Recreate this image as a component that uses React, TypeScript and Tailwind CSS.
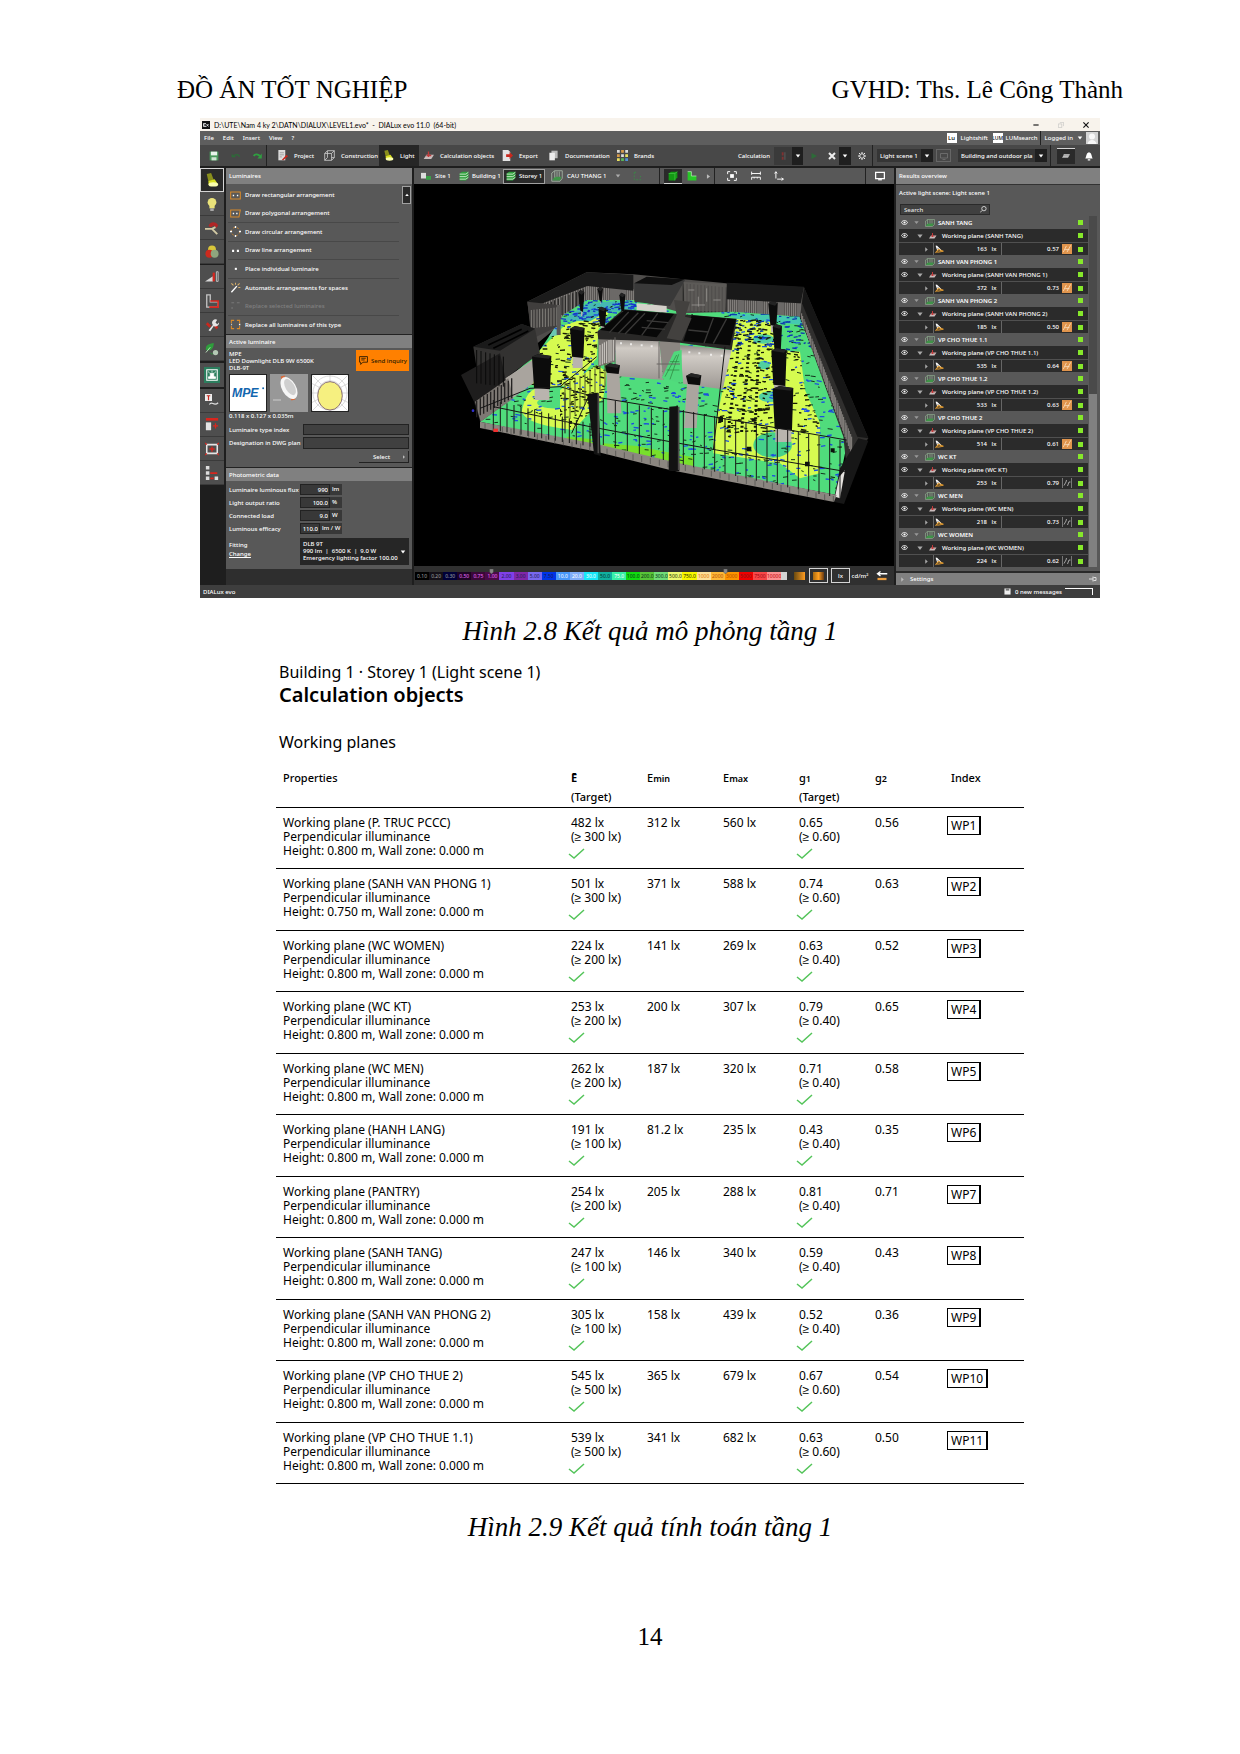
import React from "react";

type Kids = { children?: React.ReactNode };

function Ic({ children, className = "size-[10px]" }: Kids & { className?: string }) {
  return (
    <svg viewBox="0 0 16 16" className={`${className} shrink-0`} fill="none" aria-hidden="true">
      {children}
    </svg>
  );
}

const Lamp = () => (
  <>
    <path d="M2 1l5-1 3 8-6 2z" fill="#8a8f1c" />
    <path d="M4 9l7-2 4 6H4z" fill="#d9e021" />
    <ellipse cx="9.500" cy="13" rx="5.500" ry="2.500" fill="#fbffb0" />
  </>
);
const Floppy = () => (
  <>
    <path d="M1 1h14v14H1z" fill="#4a9a5c" />
    <path d="M3 1h10v6H3z" fill="#e8f4ea" />
    <path d="M4 10h8v5H4z" fill="#cfe6d3" />
  </>
);
const Layers = () => (
  <>
    <path d="M1 4l4-3h10v10l-4 4H1z" fill="#2f9e3c" />
    <path d="M1 5h10l4-3M1 9h10l4-3M1 13h10l4-3" stroke="#d5f0d5" strokeWidth="1.400" />
  </>
);
const Room = () => (
  <>
    <path d="M2 13l3-4h9l-2 5H2z" fill="#3f9448" />
    <path d="M1 4v11h11l3-4V1H5L1 4zM5 1v9M8 2v7M11 2v7" stroke="#a9b8a9" strokeWidth="1.100" />
  </>
);
const Plane = () => (
  <>
    <path d="M5 7h11l-4 6H1z" fill="#c9bcbc" />
    <path d="M8 2v8M5 8h7" stroke="#c03a3a" strokeWidth="2" />
  </>
);
const Eye = () => (
  <>
    <path d="M1 8c3-6 11-6 14 0-3 6-11 6-14 0z" stroke="#fff" strokeWidth="2" />
    <circle cx="8" cy="8" r="2.500" fill="#fff" />
  </>
);

/* ---------- 3D view ---------- */

function marks(count: number, seed: number, x0: number, y0: number, w: number, h: number) {
  let s = seed * 7919;
  const r = () => {
    s = (s * 16807) % 2147483647;
    return s / 2147483647;
  };
  let d = "";
  for (let i = 0; i < count; i++) {
    const x = Math.round(x0 + r() * w);
    const y = Math.round(y0 + r() * h);
    const l = Math.round(5 + r() * 11);
    d += `M${x} ${y}l${l} ${Math.round(r() * 6 - 3)}`;
  }
  return d;
}

function bars(x1: number, y1: number, x2: number, y2: number, n: number, h1: number, h2: number) {
  let d = "";
  for (let i = 0; i <= n; i++) {
    const t = i / n;
    d += `M${Math.round(x1 + (x2 - x1) * t)} ${Math.round(y1 + (y2 - y1) * t)}v${Math.round(h1 + (h2 - h1) * t)}`;
  }
  return d;
}

function Pillar({ x, y, w, h, base }: { x: number; y: number; w: number; h: number; base: number }) {
  return (
    <g>
      <path d={`M${x + 8} ${y + h - 6}h${w - 14}v${base}h${-(w - 14)}z`} fill="#b9b4ae" />
      <path d={`M${x} ${y + 6}l${w / 3} -8l${(w * 2) / 3} 6l-4 ${h}l${-w + 10} -4z`} fill="#0c0c0c" />
      <path d={`M${x} ${y + 6}l${w / 3} -8l${(w * 2) / 3} 6l-8 8z`} fill="#242424" />
    </g>
  );
}

function Scene() {
  return (
    <svg viewBox="-108 -198 1440 1146" className="block min-h-0 w-full flex-1 bg-black" role="img" aria-label="Storey 1 light simulation">
      <defs>
        <clipPath id="floor">
          <path d="M90 515L180 450L160 400L270 300L340 195L410 150L560 150L700 190L850 185L1048 200L1195 560L1160 735L690 645L440 590Z" />
        </clipPath>
        <clipPath id="yellow">
          <path d="M270 300L345 225L440 195L490 165L445 240L440 325L370 405L300 410L190 400zM330 420L440 345L470 365L460 445L370 540L330 500zM790 590L860 205L960 208L985 300L1050 305L1065 420L1110 520L1108 670L1050 685L990 640L790 610z" />
        </clipPath>
        <linearGradient id="wall" x1="0" y1="0" x2="0" y2="1">
          <stop offset="0" stopColor="#8e8a86" />
          <stop offset="0.250" stopColor="#d0cbc5" />
          <stop offset="1" stopColor="#9c9792" />
        </linearGradient>
      </defs>
      {/* rear walls */}
      <path d="M232 155L410 67L550 73L700 88L830 100L1062 112L1080 200L830 200L560 190L410 150L340 215L250 290z" fill="#4f4d4b" />
      <path d={bars(245, 170, 410, 105, 22, 90, 50) + bars(415, 105, 550, 118, 22, 45, 40) + bars(835, 145, 1050, 160, 34, 44, 44)} stroke="#a8a4a0" strokeWidth="2" />
      <path d={bars(250, 175, 400, 118, 14, 70, 40) + bars(700, 100, 828, 112, 12, 80, 80)} stroke="#2b2a29" strokeWidth="4" />
      <path d="M232 155L410 67L550 74V122L412 108L240 175z" fill="#1b1b1b" />
      <path d="M830 98L1062 110L1052 160L830 148z" fill="#191919" />
      <path d="M700 96L830 102L826 185L705 182z" fill="#625f5d" fillOpacity="0.700" />
      <path d="M715 120h18M745 140v30M770 115v40M790 150h22M725 165h40" stroke="#a8a4a0" strokeWidth="2" />

      {/* calculation surface */}
      <g clipPath="url(#floor)">
        <path d="M60 120H1220V760H60z" fill="#50dc7c" />
        <path d="M270 300L345 225L440 195L490 165L445 240L440 325L370 405L300 410L190 400zM330 420L440 345L470 365L460 445L370 540L330 500z" fill="#d6fb50" />
        <path d="M215 485C230 420 250 410 290 415L300 445C240 445 250 480 330 475L375 500L370 540C300 530 230 520 215 485z" fill="#d6fb50" />
        <path d="M860 205L960 208L985 300L1050 305L1065 420L1110 520L1108 670L1050 685L990 640L790 610L790 560z" fill="#d6fb50" />
        <path d="M340 210l70-50 90-6 60 6-10 22-80 4-50 28z" fill="#45b9b4" />
        <path d="M256 235l70-15v35l-62 12z" fill="#6cc7b4" />
        <path d="M830 190l220 10 10 25-200-18z" fill="#45c9b0" />
        <ellipse cx="940" cy="267" rx="32" ry="14" fill="#50cfa0" />
        <ellipse cx="942" cy="345" rx="18" ry="13" fill="#50cfa0" />
        <ellipse cx="960" cy="440" rx="34" ry="16" fill="#50cfa0" />
        <ellipse cx="968" cy="585" rx="58" ry="38" fill="#46d18a" />
        <path d="M460 580L560 588L730 622V650L450 598zM350 560l80 8v20l-80-12z" fill="#78e02c" />
        <path d={marks(620, 7, 100, 140, 1090, 580)} stroke="#14341c" strokeWidth="3" />
        <path d={marks(560, 31, 100, 140, 1090, 580)} stroke="#1c4fe0" strokeWidth="4" />
        <path d={marks(110, 97, 330, 140, 230, 80)} stroke="#1637c8" strokeWidth="4" />
        <path d={marks(100, 55, 830, 185, 260, 120)} stroke="#0d3ab0" strokeWidth="4" />
      </g>
      <g clipPath="url(#yellow)">
        <path d={marks(900, 11, 180, 160, 930, 400)} stroke="#161a06" strokeWidth="4" />
      </g>
      <path d={bars(875, 210, 835, 540, 24, 4, 6) + bars(905, 210, 875, 540, 26, 4, 6) + bars(930, 210, 915, 540, 26, 4, 6)} stroke="#10180a" strokeWidth="9" />

      {/* left volumes */}
      <path d="M232 155L325 165L332 225L256 262L240 225z" fill="#403e3d" />
      <path d={bars(244, 180, 320, 172, 9, 55, 55)} stroke="#a5a19c" strokeWidth="2" />
      <path d="M70 290L215 222L255 236L270 310L155 392L90 420z" fill="#333231" />
      <path d="M70 290L215 222L255 236L150 302z" fill="#1a1a1a" />
      <path d="M115 285L215 238M130 295L235 243" stroke="#000" strokeWidth="5" />
      <path d="M155 392L270 315L250 400L180 450z" fill="#a9a49e" />
      <path d="M33 375L150 310L180 450L90 515L72 455z" fill="#1e1d1d" />
      <path d="M75 455L175 385L190 445L92 515z" fill="#7d7873" />
      <path d={bars(80, 452, 185, 385, 10, 50, 60)} stroke="#252322" strokeWidth="4" />
      <path d={bars(80, 300, 160, 320, 6, 100, 90)} stroke="#0a0a0a" strokeWidth="3" />

      {/* service core */}
      <path d="M560 160L650 168V188L560 180z" fill="#d4d0ca" />
      <path d="M553 100L590 82L705 90L660 168L553 155z" fill="#393939" />
      <path d="M553 100L590 80L705 88L665 105z" fill="#0f0f0f" />
      <path d="M445 240L495 255V335L445 350z" fill="#77736f" />
      <path d={bars(450, 285, 490, 262, 6, 60, 70)} stroke="#d2cec8" strokeWidth="3" />
      <path d="M493 262L628 272L640 390L500 378z" fill="url(#wall)" />
      <path d="M628 275L690 235V305L640 390z" fill="#8b8681" />
      <path d="M690 285L845 300L818 418L700 402z" fill="url(#wall)" />
      <path d="M635 385L672 305L695 300V400z" fill="#50d87c" />
      <path d="M645 380l35-65M660 388l26-75M650 360h38M660 335h28" stroke="#2a7c3a" strokeWidth="2" />
      <path d="M442 245L520 178L860 206L845 300L690 278L628 274L445 268z" fill="#292827" />
      <path d="M450 240L525 180L672 192L620 262z" fill="#080808" />
      <path d="M725 196L858 208L840 286L700 274z" fill="#080808" />
      <path d="M672 150L720 155L705 200L725 205L695 272L650 265L680 195z" fill="#43413f" />
      <path d="M478 248l58-62M505 250l60-62M525 252l60-62M575 256l48-66M575 232l70 6M590 212l65 6M762 280l28-76M715 240l60 6M790 280l40-74" stroke="#393837" strokeWidth="4" />
      <path d="M510 280h6M540 283h6M572 286h6M602 289h6M715 307h6M745 310h6M780 314h6M812 317h6" stroke="#fff" strokeWidth="6" opacity="0.700" />
      <path d="M627 275v110M620 342h70M495 262v110" stroke="#6a6764" strokeWidth="3" />

      {/* right facade */}
      <path d="M1062 112L1255 565L1190 655L1180 560L1050 200z" fill="#302f2e" />
      <path d={bars(1055, 190, 1205, 560, 44, 22, 55)} stroke="#b3aea9" strokeWidth="2" />
      <path d="M1062 112L1255 565L1222 560L1056 160z" fill="#161616" />
      <path d="M1170 655L1225 565L1255 572L1182 762L1150 755z" fill="#171717" />
      <path d="M1168 680L1185 660L1170 745L1155 740z" fill="#e5e2de" />

      {/* columns */}
      <Pillar x={385} y={122} w={18} h={60} base={22} />
      <Pillar x={443} y={112} w={16} h={40} base={16} />
      <Pillar x={508} y={130} w={18} h={52} base={8} />
      <Pillar x={445} y={172} w={24} h={55} base={12} />
      <path d="M320 165h12v90h-12z" fill="#5a5856" />
      <Pillar x={360} y={230} w={44} h={90} base={40} />
      <Pillar x={246} y={314} w={58} h={100} base={42} />
      <Pillar x={955} y={155} w={28} h={70} base={28} />
      <Pillar x={968} y={224} w={28} h={80} base={40} />
      <Pillar x={964} y={296} w={46} h={108} base={42} />
      <Pillar x={968} y={410} w={62} h={126} base={46} />
      <path d="M470 360h38l6 130h-42z" fill="#aaa59f" />
      <Pillar x={464} y={342} w={46} h={26} base={4} />
      <path d="M712 390h36l-8 144h-38z" fill="#aaa59f" />
      <Pillar x={708} y={372} w={46} h={30} base={4} />

      {/* front glazing */}
      <path d="M90 515L440 582L690 640L1160 735L1152 756L660 660L440 605L90 534z" fill="#8b8680" />
      <path d={bars(130, 450, 420, 520, 14, 90, 70) + bars(460, 445, 640, 480, 5, 140, 150) + bars(700, 480, 1170, 570, 15, 165, 175)} stroke="#171716" strokeWidth="3" />
      <path d={bars(105, 520, 1150, 738, 40, 18, 18)} stroke="#4a4846" strokeWidth="2" />
      <path d="M90 475L240 415L330 410L430 440L660 478L1190 570M130 470L420 530L660 575L800 600L1190 665M330 410L440 320M420 430L365 550M345 430v120M825 290L790 600" stroke="#151515" strokeWidth="3" fill="none" />
      <path d={bars(345, 400, 465, 340, 8, 120, 70)} stroke="#55582e" strokeWidth="3" />
      <path d="M412 432L445 428L452 618L432 612z" fill="#121212" />
      <path d="M658 470L684 468L688 664L656 662z" fill="#121212" />
      <path d="M445 430v180M686 470v190" stroke="#4b4947" strokeWidth="5" />
      <path d="M805 500h14v16h-14zM890 590h14v14h-14zM1065 635h14v14h-14zM1142 595h12v12h-12zM905 505h12v10h-12z" fill="#0c120c" />
      <path d="M130 536h14v10h-14z" fill="#f03030" />
      <circle cx="69" cy="482" r="4" fill="#3030d0" />
    </svg>
  );
}

/* ---------- Application window ---------- */

const plain = "border-b border-[#3a3a3a] bg-[#4e4e4e]";

const stripIcons: { label: string; icon: React.ReactNode; cls: string }[] = [
  { label: "Luminaires", icon: <Lamp />, cls: "border border-neutral-300 bg-[#2a2a2a]" },
  { label: "Lamps", cls: plain, icon: <><circle cx="8" cy="6" r="5" fill="#e9e27a" /><path d="M5 10h6v3H5z" fill="#e9e27a" /><path d="M6 13h4v3H6z" fill="#a8a8a8" /></> },
  { label: "Arrange", cls: plain, icon: <><path d="M4 6c1-6 9-6 11-1l-2 3-3-3-3 2z" fill="#b02626" /><path d="M0 9l8 0 6 6M8 9l4-2" stroke="#d2c9a4" strokeWidth="2.200" /></> },
  { label: "Colours", cls: plain, icon: <><circle cx="8" cy="5" r="4.500" fill="#d8c63a" /><circle cx="5" cy="10" r="4.500" fill="#cc2a1e" /><circle cx="11" cy="10" r="4.500" fill="#8fa57e" /></> },
  { label: "Dimming", cls: "mt-px border-b border-[#3a3a3a] bg-[#4e4e4e]", icon: <><path d="M0 13L9 7v6z" fill="#d8d8d8" /><path d="M10 3v10" stroke="#d8261e" strokeWidth="2.500" /><path d="M13 2h2v11h-2z" stroke="#c9c9c9" /></> },
  { label: "Areas", cls: plain, icon: <><path d="M2 1h4v8h9v6H2z" stroke="#c4c4c4" strokeWidth="1.500" /><path d="M6 8h9v7H5" stroke="#d8261e" strokeWidth="1.800" /></> },
  { label: "Maintenance", cls: plain, icon: <><path d="M2 6l4 4M10 6l4 6" stroke="#c8281e" strokeWidth="3" /><path d="M4 14l5-6a4 4 0 0 1 5-6l-2 3 2 2 2-2a4 4 0 0 1-6 4l-4 6z" fill="#e4e4e4" /></> },
  { label: "Energy", cls: plain, icon: <><path d="M1 9C0 3 5 2 10 1c0 6-3 10-9 8z" fill="#2f9e3c" /><path d="M1 12l5-6" stroke="#c8ecc8" /><path d="M6 12c2 3 3 1 5 0" stroke="#2f9e3c" /><circle cx="12" cy="12" r="3" fill="#b5c9b5" /></> },
  { label: "Emergency", cls: "my-[2px] border-4 border-[#4e4e4e] bg-[#2c7e5e]", icon: <><path d="M2 2h12v12H2z" stroke="#fff" strokeWidth="1.200" /><path d="M4 10h8v2H4zM6 6h4v4H6zM8 3v2M4 4l1 2M12 4l-1 2" fill="#fff" stroke="#fff" strokeWidth="0.800" /></> },
  { label: "Text", cls: plain, icon: <><path d="M0 0h8v8H0z" fill="#eee" /><path d="M2 2h4M4 2v5" stroke="#c8281e" strokeWidth="1.400" /><path d="M5 12c3-5 5 3 10-2" stroke="#ddd" strokeWidth="1.400" /></> },
  { label: "Export", cls: plain, icon: <><path d="M1 0h14v3H1z" fill="#d8261e" /><path d="M1 5h6v9H1z" fill="#e4e4e4" /><path d="M9 9h6M12 6v6" stroke="#d8261e" strokeWidth="1.500" /></> },
  { label: "Frame", cls: plain, icon: <><path d="M2 3h12v10H2z" stroke="#e4e4e4" strokeWidth="1.800" /><path d="M8 5v6M5 8h6M0 1l2 2M16 1l-2 2M0 15l2-2M16 15l-2-2" stroke="#d8261e" strokeWidth="1.500" /></> },
  { label: "Structure", cls: plain, icon: <><path d="M1 0h4v4H1zM1 6h4v4H1zM1 12h4v4H1zM11 12h4v4h-4z" fill="#ddd" /><path d="M6 8h8M6 14h4" stroke="#d8261e" strokeWidth="2" /></> },
];

const tools: { label: string; sep: string; icon: React.ReactNode; dim?: boolean }[] = [
  { label: "Draw rectangular arrangement", sep: "", icon: <><path d="M1 3h14v10H1z" stroke="#d88a2a" strokeWidth="1.500" /><path d="M4 7h2v2H4zM10 7h2v2h-2z" fill="#fff" /></> },
  { label: "Draw polygonal arrangement", sep: "border-b", icon: <><path d="M1 3h14l-2 10H1z" stroke="#d88a2a" strokeWidth="1.500" /><path d="M4 7h2v2H4zM9 7h2v2H9z" fill="#fff" /></> },
  { label: "Draw circular arrangement", sep: "border-b", icon: <><circle cx="8" cy="8" r="6" stroke="#d88a2a" strokeDasharray="3 3" strokeWidth="1.300" /><path d="M7 0h2v3H7zM7 13h2v3H7zM0 7h3v2H0zM13 7h3v2h-3z" fill="#fff" /></> },
  { label: "Draw line arrangement", sep: "border-b", icon: <path d="M3 7h3v3H3zM10 7h3v3h-3z" fill="#fff" /> },
  { label: "Place individual luminaire", sep: "border-b", icon: <path d="M7 7h3v3H7z" fill="#fff" /> },
  { label: "Automatic arrangements for spaces", sep: "", icon: <><path d="M2 15L10 6" stroke="#fff" strokeWidth="2" /><path d="M2 2l3 3M8 1v3M14 2l-3 3M15 8h-3" stroke="#d8b06a" strokeWidth="1.500" /></> },
  { label: "Replace selected luminaires", sep: "border-b", dim: true, icon: <path d="M2 4h4M10 4h4M3 10v3" stroke="#777" strokeWidth="1.500" /> },
  { label: "Replace all luminaires of this type", sep: "", icon: <><path d="M2 6V2h4M10 2h4v4M14 10v4h-4M6 14H2v-4" stroke="#d88a2a" strokeWidth="1.500" /><path d="M2 8h1M13 8h2" stroke="#fff" strokeWidth="2" /></> },
];

const groups: [string, string, string, string, boolean][] = [
  ["SANH TANG", "Working plane (SANH TANG)", "163", "0.57", true],
  ["SANH VAN PHONG 1", "Working plane (SANH VAN PHONG 1)", "372", "0.73", true],
  ["SANH VAN PHONG 2", "Working plane (SANH VAN PHONG 2)", "185", "0.50", true],
  ["VP CHO THUE 1.1", "Working plane (VP CHO THUE 1.1)", "535", "0.64", true],
  ["VP CHO THUE 1.2", "Working plane (VP CHO THUE 1.2)", "533", "0.63", true],
  ["VP CHO THUE 2", "Working plane (VP CHO THUE 2)", "514", "0.61", true],
  ["WC KT", "Working plane (WC KT)", "253", "0.79", false],
  ["WC MEN", "Working plane (WC MEN)", "218", "0.73", false],
  ["WC WOMEN", "Working plane (WC WOMEN)", "224", "0.62", false],
];

const scale: [string, string][] = [
  ["0.10", "bg-black text-neutral-400"],
  ["0.20", "bg-[#141018] text-neutral-400"],
  ["0.30", "bg-[#000038] text-neutral-400"],
  ["0.50", "bg-[#1c0424] text-fuchsia-400"],
  ["0.75", "bg-[#3a0838] text-fuchsia-400"],
  ["1.00", "bg-[#4a0a48] text-fuchsia-400"],
  ["2.00", "bg-[#8040e8] text-indigo-950"],
  ["3.00", "bg-[#8028a8] text-indigo-950"],
  ["5.00", "bg-[#7868f0] text-indigo-950"],
  ["7.50", "bg-[#0034e8] text-indigo-950"],
  ["10.0", "bg-[#4898f8] text-white"],
  ["20.0", "bg-[#80acf8] text-white"],
  ["30.0", "bg-[#18e8f8] text-white"],
  ["50.0", "bg-[#10b0a0] text-teal-950"],
  ["75.0", "bg-[#38f0a8] text-white"],
  ["100.0", "bg-[#10dc10] text-green-950"],
  ["200.0", "bg-[#58c438] text-green-950"],
  ["300.0", "bg-[#70dc78] text-green-950"],
  ["500.0", "bg-[#ecf870] text-lime-950"],
  ["750.0", "bg-[#f8f800] text-lime-950"],
  ["1000", "bg-[#fce098] text-amber-600"],
  ["2000", "bg-[#fcb838] text-amber-700"],
  ["3000", "bg-[#fc9400] text-amber-700"],
  ["5000", "bg-[#f00000] text-red-900"],
  ["7500", "bg-[#f84848] text-red-800"],
  ["10000", "bg-[#fc9090] text-red-700"],
];

const Caret = ({ className = "" }: { className?: string }) => (
  <Ic className={`size-[6px] ${className}`}>
    <path d="M2 4h12l-6 8z" fill="#fff" />
  </Ic>
);

function Tab({ label, width, icon, active }: { label: string; width: string; icon: React.ReactNode; active?: boolean }) {
  return (
    <button className={`flex h-full items-center gap-[6px] whitespace-nowrap pl-1 ${width} ${active ? "bg-[#262626]" : ""}`}>
      <Ic className="size-[11px]">{icon}</Ic>
      {label}
    </button>
  );
}

const Sep = () => <span className="h-full w-px shrink-0 bg-[#222]" />;

function Toolbar() {
  return (
    <div className="flex h-[21px] items-center bg-[#484848]">
      <div className="flex h-full w-[66px] items-center gap-3 pl-[9px]">
        <button aria-label="Save"><Ic><Floppy /></Ic></button>
        <button aria-label="Undo"><Ic><path d="M14 9C11 5 7 5 4 8M2 5v4h5" stroke="#2d6b38" strokeWidth="2" /></Ic></button>
        <button aria-label="Redo"><Ic><path d="M1 8c3-4 7-3 10 0" stroke="#2fa040" strokeWidth="3" /><path d="M14 4v8H7z" fill="#2fa040" /></Ic></button>
      </div>
      <Sep />
      <div className="flex h-full flex-1 items-center pl-[6px]">
        <Tab label="Project" width="w-[47px]" icon={<><path d="M2 0h10v15H2z" fill="#ddd" /><path d="M4 4h6M4 7h6M4 10h3" stroke="#888" /><path d="M7 14l7-7 2 2-7 6z" fill="#c8281e" /></>} />
        <Tab label="Construction" width="w-[59px]" icon={<><path d="M1 5v10h10V5zM5 1h10v10h-4M5 1v10l-4 4M15 1l-4 4M15 11l-4 4M1 5l4-4" stroke="#ccc" strokeWidth="1.200" /></>} />
        <Tab label="Light" width="w-[40px]" active icon={<Lamp />} />
        <Tab label="Calculation objects" width="w-[79px]" icon={<Plane />} />
        <Tab label="Export" width="w-[46px]" icon={<><path d="M1 0h8l3 3v13H1z" fill="#e4e4e4" /><path d="M6 6h5V3l5 5-5 5v-3H6z" fill="#c8281e" /></>} />
        <Tab label="Documentation" width="w-[69px]" icon={<><path d="M5 1h9v11H5z" fill="#bbb" /><path d="M2 4h8v11H2z" fill="#eee" /></>} />
        <Tab label="Brands" width="w-[50px]" icon={<><path d="M0 0h4v4H0zM12 0h4v4h-4zM6 6h4v4H6z" fill="#ddd" /><path d="M6 0h4v4H6zM0 6h4v4H0z" fill="#d89a4a" /><path d="M0 12h4v4H0zM12 6h4v4h-4z" fill="#e8e060" /><path d="M6 12h4v4H6z" fill="#58b858" /><path d="M12 12h4v4h-4z" fill="#5090d8" /></>} />
      </div>
      <div className="flex h-full items-center">
        <span className="w-[36px]">Calculation</span>
        <button aria-label="Start calculation" className="flex h-[18px] w-[18px] items-center justify-center bg-[#3a3a3a]"><Ic><path d="M6 2h3v5H6zM6 9h3v5H6z" fill="#7e3232" /><path d="M10 2h2v12h-2z" fill="#555" /></Ic></button>
        <button aria-label="Calculation options" className="flex h-[18px] w-[11px] items-center justify-center bg-[#1f1f1f]"><Caret /></button>
        <span className="flex w-[22px] justify-center"><Ic className="size-2"><path d="M3 2l11 6-11 6z" fill="#2d6b38" /></Ic></span>
        <button aria-label="Cancel" className="flex w-[14px] justify-center"><Ic className="size-2"><path d="M2 2l12 12M14 2L2 14" stroke="#eee" strokeWidth="4" /></Ic></button>
        <button aria-label="More" className="flex h-[18px] w-[12px] items-center justify-center bg-[#1f1f1f]"><Caret /></button>
        <button aria-label="Settings" className="flex w-[21px] justify-center"><Ic className="size-[8px]"><circle cx="8" cy="8" r="4.500" stroke="#eee" strokeWidth="2" /><path d="M8 0v3M8 13v3M0 8h3M13 8h3M2 2l2 2M12 12l2 2M14 2l-2 2M2 14l2-2" stroke="#eee" strokeWidth="2" /></Ic></button>
        <Sep />
      </div>
      <div className="flex h-full w-[227px] items-center gap-[3px] pl-1">
        <Dropdown label="Light scene" text="Light scene 1" width="w-[56px]" />
        <button aria-label="Scene view" className="mr-1 flex h-[13px] w-[15px] items-center justify-center border border-[#666]"><Ic className="size-2"><path d="M1 3h14v9H1zM5 15h6" stroke="#777" strokeWidth="1.500" /></Ic></button>
        <Dropdown label="Display filter" text="Building and outdoor pla" width="w-[89px]" />
        <Sep />
        <button aria-label="Planes" className="ml-[3px] flex h-[16px] w-[18px] items-center justify-center border-t border-neutral-300 bg-[#2a2a2a]"><Ic className="h-2 w-3"><path d="M4 4h12l-4 8H0z" fill="#999" /><path d="M2 9h11M3 6h12" stroke="#ddd" /></Ic></button>
        <button aria-label="Notifications" className="flex flex-1 justify-center"><Ic><path d="M2 12c2-2 1-9 6-10 5 1 4 8 6 10zM6 13h4v2H6z" fill="#fff" /></Ic></button>
      </div>
    </div>
  );
}

function Dropdown({ label, text, width }: { label: string; text: string; width: string }) {
  return (
    <span className={`relative flex h-[13px] items-center bg-[#353535] ${width}`}>
      <select aria-label={label} className="h-full w-full appearance-none overflow-hidden bg-transparent pl-[3px] pr-3 font-medium text-white">
        <option>{text}</option>
      </select>
      <span className="pointer-events-none absolute right-0 flex h-full w-3 items-center justify-center bg-[#1f1f1f]"><Caret /></span>
    </span>
  );
}

function PanelHead({ children, className = "h-[13px]" }: Kids & { className?: string }) {
  return <h3 className={`flex shrink-0 items-center bg-[#808080] pl-[3px] ${className}`}>{children}</h3>;
}

function PhotoRow({ id, label, value, unit }: { id: string; label: string; value: string; unit: string }) {
  const wide = unit.length > 2;
  return (
    <div className="flex h-[13px] items-center">
      <label htmlFor={id} className="w-[71px] whitespace-nowrap">{label}</label>
      <input id={id} readOnly value={value} className={`h-[11px] border border-[#222] bg-[#383838] px-px text-right ${wide ? "w-[20px]" : "w-[30px]"}`} />
      <span className={`h-[11px] bg-[#383838] pl-[2px] leading-[11px] ${wide ? "w-[22px]" : "w-[12px]"}`}>{unit}</span>
    </div>
  );
}

function LeftPanel() {
  return (
    <div className="flex w-[186px] shrink-0 flex-col bg-[#2e2e2e]">
      <PanelHead className="h-4">Luminaires</PanelHead>
      <div className="flex h-[150px] bg-[#585858] pt-[2px]">
        <ul className="grid flex-1 grid-rows-8 pl-[2px]">
          {tools.map((t) => (
            <li key={t.label} className={`flex border-[#484848] ${t.sep}`}>
              <button className={`flex flex-1 items-center gap-1 pl-[2px] ${t.dim ? "text-[#808080]" : ""}`}>
                <Ic className="size-[11px]">{t.icon}</Ic>
                {t.label}
              </button>
            </li>
          ))}
        </ul>
        <button aria-label="Scroll up" className="ml-[3px] mr-px flex h-[18px] w-[9px] items-center justify-center border border-neutral-400 bg-[#2a2a2a]"><Ic className="size-1"><path d="M1 12h14L8 3z" fill="#fff" /></Ic></button>
      </div>
      <div className="h-px bg-[#222]" />
      <PanelHead>Active luminaire</PanelHead>
      <div className="flex h-[119px] flex-col bg-[#585858] px-[3px]">
        <div className="flex h-[26px] items-start justify-between pt-[2px]">
          <p className="pt-px leading-[7px]">MPE<br />LED Downlight DLB 9W 6500K<br />DLB-9T</p>
          <button className="flex h-[21px] w-[53px] items-center gap-[3px] whitespace-nowrap bg-[#ff8000] pl-[3px] text-[#2a1a00]">
            <Ic className="size-[9px]"><path d="M1 1h14v10H7l-4 4v-4H1zM4 4h8M4 7h6" stroke="#2a1a00" strokeWidth="1.500" /></Ic>
            Send inquiry
          </button>
        </div>
        <div className="flex h-[38px] gap-[3px]">
          <svg viewBox="0 0 38 38" className="size-[38px] border border-[#222] bg-white" role="img" aria-label="MPE">
            <text x="2" y="23" fontFamily="Liberation Sans" fontWeight="bold" fontStyle="italic" fontSize="13" fill="#1265ae">MPE</text>
            <circle cx="35" cy="14" r="1" fill="#1265ae" />
          </svg>
          <svg viewBox="0 0 38 38" className="size-[38px] bg-[#989898]" role="img" aria-label="Downlight">
            <path d="M11 4l4-1M21 25l4-1" stroke="#d86a3a" strokeWidth="3" />
            <ellipse cx="19" cy="14" rx="7" ry="12" transform="rotate(-30 19 14)" fill="#f6f6f6" />
            <ellipse cx="20" cy="13" rx="4.500" ry="9" transform="rotate(-30 20 13)" fill="#cfcfcf" />
            <path d="M3 26h8" stroke="#ccc" />
          </svg>
          <svg viewBox="0 0 38 38" className="size-[38px] border border-[#222] bg-white" role="img" aria-label="Light distribution">
            <g fill="none" stroke="#c8c8c8" strokeWidth="0.700">
              <circle cx="19" cy="19" r="8" /><circle cx="19" cy="19" r="13" /><circle cx="19" cy="19" r="18" />
              <path d="M0 0l38 38M38 0L0 38M19 0v38M0 19h38M0 9l38 20M0 29L38 9" />
            </g>
            <ellipse cx="19" cy="22" rx="13" ry="15" fill="#f6f080" stroke="#6a4a6a" strokeWidth="0.800" />
          </svg>
        </div>
        <p className="h-[11px] leading-[9px]">0.118 x 0.127 x 0.035m</p>
        <div className="flex h-[13px] items-center">
          <label htmlFor="lti" className="w-[74px] whitespace-nowrap">Luminaire type index</label>
          <input id="lti" readOnly className="h-[11px] min-w-0 flex-1 border border-[#222] bg-[#404040]" />
        </div>
        <div className="flex h-[14px] items-center">
          <label htmlFor="dwg" className="w-[74px] whitespace-nowrap">Designation in DWG plan</label>
          <input id="dwg" readOnly className="h-[12px] min-w-0 flex-1 border border-[#222] bg-[#404040]" />
        </div>
        <button className="mt-px flex h-[12px] w-[50px] items-center justify-between self-end border-b border-r border-[#222] pl-[14px] pr-[2px]">
          Select <Ic className="size-1"><path d="M4 1l8 7-8 7z" fill="#bbb" /></Ic>
        </button>
      </div>
      <div className="h-px bg-[#222]" />
      <PanelHead>Photometric data</PanelHead>
      <div className="flex flex-col bg-[#585858] px-[3px] pb-1 pt-[2px]">
        <PhotoRow id="flux" label="Luminaire luminous flux" value="990" unit="lm" />
        <PhotoRow id="lor" label="Light output ratio" value="100.0" unit="%" />
        <PhotoRow id="load" label="Connected load" value="9.0" unit="W" />
        <PhotoRow id="eff" label="Luminous efficacy" value="110.0" unit="lm / W" />
        <div className="mt-[3px] flex h-[27px]">
          <p className="w-[71px] pt-[3px] leading-[9px]">Fitting<br /><a href="#fitting" className="underline">Change</a></p>
          <button className="flex flex-1 items-center justify-between bg-[#262626] pl-[3px] text-left leading-[7px]">
            <span className="whitespace-pre">{"DLB 9T\n990 lm  |  6500 K  |  9.0 W\nEmergency lighting factor 100.00"}</span>
            <Caret className="mr-[3px]" />
          </button>
        </div>
      </div>
    </div>
  );
}

function CenterPanel() {
  return (
    <div className="flex min-w-0 flex-1 flex-col">
      <div className="flex h-4 items-center bg-[#585858]">
        <button className="flex w-[45px] items-center gap-1 pl-[7px]"><Ic><path d="M0 3h8v9H0z" fill="#ddd" /><path d="M8 8h8v6H8z" fill="#3aa048" /></Ic>Site 1</button>
        <button className="flex w-[44px] items-center gap-[3px]"><Ic><Layers /></Ic>Building 1</button>
        <button className="flex h-[15px] w-[42px] items-center gap-[3px] border border-neutral-400 bg-[#2a2a2a] pl-[2px]"><Ic><Layers /></Ic>Storey 1</button>
        <button className="flex w-[84px] items-center gap-1 pl-[6px]"><Ic className="size-[12px]"><Room /></Ic>CAU THANG 1<Caret className="ml-1 opacity-50" /></button>
        <span className="flex w-[30px] justify-start pl-1"><Ic><path d="M2 2v12h12M2 2h4M12 8v2" stroke="#3c8548" strokeWidth="1.500" strokeDasharray="3 2" /></Ic></span>
        <Sep />
        <button aria-label="3D view" className="ml-1 flex h-[15px] w-[18px] items-center justify-center border-b border-neutral-300 bg-[#2a2a2a]"><Ic><path d="M1 4l4-3h10v9l-4 5H1z" fill="#139a13" /><path d="M1 4h10v11M11 4l4-3" stroke="#50c850" /></Ic></button>
        <button aria-label="Floor plan" className="flex w-[20px] justify-center"><Ic><path d="M1 1h6v7h8v7H1z" fill="#28c828" /><path d="M1 1h6v7h8" stroke="#c8ffc8" /></Ic></button>
        <span className="flex w-[12px] justify-center"><Ic className="size-[5px]"><path d="M3 1l10 7-10 7z" fill="#bbb" /></Ic></span>
        <Sep />
        <button aria-label="Zoom to fit" className="ml-[12px]"><Ic><path d="M1 5V1h4M11 1h4v4M15 11v4h-4M5 15H1v-4" stroke="#fff" strokeWidth="1.500" /><path d="M5 5h6v6H5z" fill="#fff" /></Ic></button>
        <button aria-label="Measure" className="ml-[13px]"><Ic className="h-[10px] w-[12px]"><path d="M1 1v5M15 1v5M1 4h14M1 14v-4h14v4M5 10v2M10 10v2" stroke="#fff" strokeWidth="1.500" /></Ic></button>
        <button aria-label="Axes" className="ml-[12px]"><Ic><path d="M3 12V2M1 4l2-3 2 3M5 13h10M12 11l3 2-3 2" stroke="#fff" strokeWidth="1.500" /></Ic></button>
        <span className="flex-1" />
        <Sep />
        <button aria-label="Display" className="flex w-[28px] justify-center"><Ic><path d="M1 2h14v10H1z" stroke="#fff" strokeWidth="2" /><path d="M5 14h6" stroke="#fff" strokeWidth="2" /></Ic></button>
      </div>
      <Scene />
      <div className="flex h-[19px] items-center bg-[#303030]">
        <div className="relative flex h-[8px] flex-1 overflow-visible pl-px text-[5px] font-normal leading-[8px]">
          {scale.map(([t, c]) => (
            <span key={t} className={`h-full min-w-0 flex-1 overflow-hidden whitespace-nowrap text-center ${c}`}>{t}</span>
          ))}
          <span className="w-[6px] bg-neutral-300" />
          <Ic className="absolute left-[75px] top-[-4px] h-[7px] w-[5px]"><path d="M2 0h12v10l-6 6-6-6z" fill="#888" stroke="#333" /></Ic>
          <Ic className="absolute left-[309px] top-[-4px] h-[7px] w-[5px]"><path d="M2 0h12v10l-6 6-6-6z" fill="#888" stroke="#333" /></Ic>
        </div>
        <div className="flex w-[107px] items-center pl-[3px]">
          <button aria-label="Smooth scale" className="flex h-[15px] w-[19px] items-center justify-center"><span className="h-2 w-[11px] bg-linear-to-r from-[#6a4a10] to-[#ff9c20]" /></button>
          <button aria-label="Stepped scale" className="flex h-[15px] w-[19px] items-center justify-center border border-neutral-300"><span className="h-2 w-[11px] bg-linear-to-r from-[#a86a10] via-[#ffa020] to-[#6a3a10]" /></button>
          <button className="ml-[3px] h-[15px] w-[19px] border border-neutral-300">lx</button>
          <button className="w-[20px]">cd/m²</button>
          <button aria-label="Swap" className="ml-[6px]"><Ic className="size-[12px]"><path d="M15 5H3M6 2L2 5l4 3" stroke="#fff" strokeWidth="1.800" /><path d="M2 12h12" stroke="#f0a040" strokeWidth="3" /></Ic></button>
        </div>
      </div>
    </div>
  );
}

const Dot = () => <span className="mr-[5px] size-[5px] shrink-0 bg-[#86e82a]" />;

function RightPanel() {
  return (
    <div className="flex w-[204px] shrink-0 flex-col bg-[#585858]">
      <PanelHead className="h-4">Results overview</PanelHead>
      <div className="h-px bg-[#333]" />
      <p className="pl-[3px] pt-[4px] leading-[8px]">Active light scene: Light scene 1</p>
      <div className="ml-1 mt-[7px] flex h-[11px] w-[90px] shrink-0 items-center border border-[#2a2a2a] bg-[#404040] pr-[2px]">
        <input aria-label="Search" placeholder="Search" className="min-w-0 flex-1 bg-transparent pl-[3px] placeholder:text-neutral-200" />
        <Ic className="size-[7px]"><circle cx="9" cy="6" r="5" stroke="#ddd" strokeWidth="2" /><path d="M5 10l-5 5" stroke="#ddd" strokeWidth="2" /></Ic>
      </div>
      <div className="mt-px flex pl-[3px] pr-[3px]">
        <ul className="flex-1">
          {groups.map(([name, plane, lux, g, warm]) => (
            <li key={name}>
              <div className="flex h-[13px] items-center font-semibold">
                <Ic className="ml-[2px] size-[7px]"><Eye /></Ic>
                <Ic className="ml-[6px] size-[5px]"><path d="M1 4h14l-7 9z" fill="#999" /></Ic>
                <svg viewBox="0 0 20 16" className="ml-[6px] mr-[3px] h-[8px] w-[10px]" fill="none" aria-hidden="true">
                  <path d="M2 13l3-4h13l-3 5H2z" fill="#3f9448" />
                  <path d="M1 4v11h14l4-4V1H5L1 4zM5 1v9M10 2v7M14 2v7" stroke="#8fb08f" strokeWidth="1.300" />
                </svg>
                <span className="flex-1">{name}</span>
                <Dot />
              </div>
              <div className="flex h-[13px] items-center bg-[#2b2b2b]">
                <Ic className="ml-[2px] size-[7px]"><Eye /></Ic>
                <Ic className="ml-[9px] size-[6px]"><path d="M1 4h14l-7 9z" fill="#aaa" /></Ic>
                <Ic className="ml-[5px] mr-[5px] h-[8px] w-[9px]"><Plane /></Ic>
                <span className="flex-1">{plane}</span>
                <Dot />
              </div>
              <div className="flex h-[13px] items-center border-t border-[#505050] bg-[#2b2b2b]">
                <Ic className="ml-[25px] mr-1 size-[5px]"><path d="M4 1l8 7-8 7z" fill="#aaa" /></Ic>
                <span className="flex h-full w-[11px] items-center border-l border-[#666] pl-px"><Ic className="size-[9px]"><path d="M2 1l3 9M3 2l8 8" stroke="#fff" strokeWidth="2" /><path d="M1 14l5-6 9 3-11 2" stroke="#e09a30" strokeWidth="2" /></Ic></span>
                <span className="w-[43px] text-right">{lux}</span>
                <span className="flex h-full w-[15px] items-center justify-center border-r border-[#666]">lx</span>
                <span className="flex-1 pr-[3px] text-right">{g}</span>
                {warm ? (
                  <Ic className="mr-[6px] size-[10px] bg-[#e0944c]"><path d="M2 13l5-10M8 13l6-11M5 9h7" stroke="#fbe0c0" strokeWidth="1.300" /></Ic>
                ) : (
                  <Ic className="mr-[6px] size-[10px] border-x border-[#777]"><path d="M2 13l4-7 1-4M9 14l3-8h3" stroke="#ccc" strokeWidth="1.500" /></Ic>
                )}
                <Dot />
              </div>
            </li>
          ))}
        </ul>
        <div className="ml-px flex w-[8px] flex-col bg-[#505050]">
          <span className="h-[178px] bg-[#4a4a4a]" />
          <span className="flex-1 bg-[#808080]" />
        </div>
      </div>
      <div className="flex-1 border-b-2 border-[#2a2a2a]" />
      <button className="flex h-[12px] items-center gap-[5px] bg-[#808080] pl-1 pr-[3px]">
        <Ic className="size-[5px]"><path d="M4 1l8 7-8 7z" fill="#bbb" /></Ic>
        <span className="flex-1 text-left">Settings</span>
        <Ic className="size-[8px]"><path d="M0 8h8M8 3v10M9 5h5v6H9" stroke="#ddd" strokeWidth="2" /></Ic>
      </button>
    </div>
  );
}

function AppWindow() {
  return (
    <section className="w-full max-w-[900px] bg-[#1e1e1e] font-['Noto_Sans','Open_Sans',sans-serif] text-[6px] font-medium leading-[8px] text-white">
      <div className="flex h-[13px] items-center bg-[#f8f3ec] font-['Lato',sans-serif] text-[7px] font-normal text-black">
        <Ic className="ml-[2px] mr-1 size-[8px]"><path d="M0 0h16v16H0z" fill="#111" /><path d="M3 5h5M3 8h4M3 11h5M3 5v6M9 6l4 5M13 6l-4 5" stroke="#fff" strokeWidth="1.500" /></Ic>
        <span className="flex-1 whitespace-pre">{"D:\\UTE\\Nam 4 ky 2\\DATN\\DIALUX\\LEVEL1.evo*  -  DIALux evo 11.0  (64-bit)"}</span>
        <button aria-label="Minimize" className="w-[25px]"><Ic className="size-[6px]"><path d="M1 8h14" stroke="#111" strokeWidth="3" /></Ic></button>
        <button aria-label="Restore" className="w-[25px]"><Ic className="size-[6px]"><path d="M1 5h9v10H1zM5 1h10v10" stroke="#bbb" strokeWidth="1.500" /></Ic></button>
        <button aria-label="Close" className="w-[17px]"><Ic className="size-[6px]"><path d="M1 1l14 14M15 1L1 15" stroke="#111" strokeWidth="3" /></Ic></button>
      </div>
      <div className="flex h-[14px] items-center bg-[#5e5e5e]">
        <nav className="flex flex-1 gap-[9px] pl-1">
          <button>File</button><button>Edit</button><button>Insert</button><button>View</button><button>?</button>
        </nav>
        <span className="mr-1 flex size-[10px] items-center justify-center bg-white text-black">Lu</span>
        <a href="#lightshift" className="w-[32px]">Lightshift</a>
        <span className="mr-[3px] flex h-[10px] w-[10px] items-center justify-center overflow-hidden bg-white text-[5px] text-black">LUM</span>
        <a href="#lumsearch" className="w-[34px]">LUMsearch</a>
        <Sep />
        <button className="ml-1 flex items-center gap-1">Logged in <Caret /></button>
        <Ic className="ml-[3px] mr-[2px] size-[12px] bg-neutral-300"><circle cx="8" cy="6" r="4" fill="#f8f8f8" /><path d="M2 16c1-7 11-7 12 0z" fill="#f8f8f8" /></Ic>
      </div>
      <Toolbar />
      <div className="flex pt-[2px]">
        <div className="mr-[2px] flex w-6 shrink-0 flex-col">
          {stripIcons.map((s) => (
            <button key={s.label} aria-label={s.label} className={`flex h-6 items-center justify-center ${s.cls}`}>
              <Ic className="size-[14px]">{s.icon}</Ic>
            </button>
          ))}
        </div>
        <LeftPanel />
        <span className="w-[2px] bg-[#1e1e1e]" />
        <CenterPanel />
        <span className="w-[2px] bg-[#1e1e1e]" />
        <RightPanel />
      </div>
      <footer className="flex h-[13px] items-center bg-[#3e3e3e] pl-[3px]">
        <span className="flex-1">DIALux evo</span>
        <Ic className="mr-1 size-[7px]"><path d="M1 1h14v14H1z" fill="#eee" /><path d="M4 1h8v5H4z" fill="#777" /></Ic>
        <span>0 new messages</span>
        <span className="ml-[3px] mr-[7px] h-[7px] w-[28px] border-r border-t border-white" />
      </footer>
    </section>
  );
}

/* ---------- Results table ---------- */

const rows: [string, string, string, string, string, string, string, string, string][] = [
  ["P. TRUC PCCC", "0.800", "482", "300", "312", "560", "0.65", "0.60", "0.56"],
  ["SANH VAN PHONG 1", "0.750", "501", "300", "371", "588", "0.74", "0.60", "0.63"],
  ["WC WOMEN", "0.800", "224", "200", "141", "269", "0.63", "0.40", "0.52"],
  ["WC KT", "0.800", "253", "200", "200", "307", "0.79", "0.40", "0.65"],
  ["WC MEN", "0.800", "262", "200", "187", "320", "0.71", "0.40", "0.58"],
  ["HANH LANG", "0.800", "191", "100", "81.2", "235", "0.43", "0.40", "0.35"],
  ["PANTRY", "0.800", "254", "200", "205", "288", "0.81", "0.40", "0.71"],
  ["SANH TANG", "0.800", "247", "100", "146", "340", "0.59", "0.40", "0.43"],
  ["SANH VAN PHONG 2", "0.800", "305", "100", "158", "439", "0.52", "0.40", "0.36"],
  ["VP CHO THUE 2", "0.800", "545", "500", "365", "679", "0.67", "0.60", "0.54"],
  ["VP CHO THUE 1.1", "0.800", "539", "500", "341", "682", "0.63", "0.60", "0.50"],
];

const Tick = () => (
  <svg viewBox="0 0 17 12" className="-ml-[3px] mt-1 h-[12px] w-[17px]" fill="none" role="img" aria-label="met">
    <path d="M1 6l5 4L16 1" stroke="#54c45a" strokeWidth="1.500" />
  </svg>
);

const Sub = ({ children }: Kids) => <sub className="bottom-0 text-[9px] font-semibold leading-none">{children}</sub>;

function ResultTable() {
  return (
    <table className="w-full table-fixed border-collapse text-left text-[12px] leading-[14px]">
      <colgroup>
        <col /><col className="w-[76px]" /><col className="w-[76px]" /><col className="w-[76px]" /><col className="w-[76px]" /><col className="w-[76px]" /><col className="w-[77px]" />
      </colgroup>
      <thead>
        <tr className="h-[39px] border-b border-black align-top text-[11px] leading-[19px] [&>th]:font-medium">
          <th className="pl-[7px]">Properties</th>
          <th className="pl-1"><b>Ē</b><br />(Target)</th>
          <th className="pl-1">E<Sub>min</Sub></th>
          <th className="pl-1">E<Sub>max</Sub></th>
          <th className="pl-1">g<Sub>1</Sub><br />(Target)</th>
          <th className="pl-1">g<Sub>2</Sub></th>
          <th className="pl-1">Index</th>
        </tr>
      </thead>
      <tbody>
        {rows.map(([name, h, e, et, mn, mx, g1, gt, g2], i) => (
          <tr key={name} className="h-[61px] border-b border-black align-top even:h-[62px] [&>td]:pt-2">
            <td className="pl-[7px]">Working plane ({name})<br />Perpendicular illuminance<br />Height: {h} m, Wall zone: 0.000 m</td>
            <td className="pl-1">{e} lx<br />(≥ {et} lx)<Tick /></td>
            <td className="pl-1">{mn} lx</td>
            <td className="pl-1">{mx} lx</td>
            <td className="pl-1">{g1}<br />(≥ {gt})<Tick /></td>
            <td className="pl-1">{g2}</td>
            <td><span className="inline-block border border-r-2 border-black px-[3px] py-px leading-[15px]">WP{i + 1}</span></td>
          </tr>
        ))}
      </tbody>
    </table>
  );
}

export default function App() {
  return (
    <main className="flex min-h-screen flex-col items-center bg-white pb-[100px] pl-[177px] pr-[117px] font-['Liberation_Serif',serif] text-black">
      <header className="flex w-full justify-between pt-[75px] text-[25px] leading-[30px]">
        <span>ĐỒ ÁN TỐT NGHIỆP</span>
        <span>GVHD: Ths. Lê Công Thành</span>
      </header>
      <div className="mt-[13px] flex w-full justify-center">
        <AppWindow />
      </div>
      <p className="mt-[16px] text-[27px] italic leading-[34px]">Hình 2.8 Kết quả mô phỏng tầng 1</p>
      <section className="w-full max-w-[748px] pt-[13px] font-['Noto_Sans',sans-serif]">
        <p className="pl-[3px] text-[16px] leading-[22px]">Building 1 · Storey 1 (Light scene 1)</p>
        <h1 className="pl-[3px] text-[20px] font-semibold leading-[24px]">Calculation objects</h1>
        <h2 className="mb-[15px] mt-6 pl-[3px] text-[16px] leading-[22px]">Working planes</h2>
        <ResultTable />
      </section>
      <p className="mt-[26px] text-[27px] italic leading-[34px]">Hình 2.9 Kết quả tính toán tầng 1</p>
      <footer className="mt-[78px] text-[25px] leading-[30px]">14</footer>
    </main>
  );
}
